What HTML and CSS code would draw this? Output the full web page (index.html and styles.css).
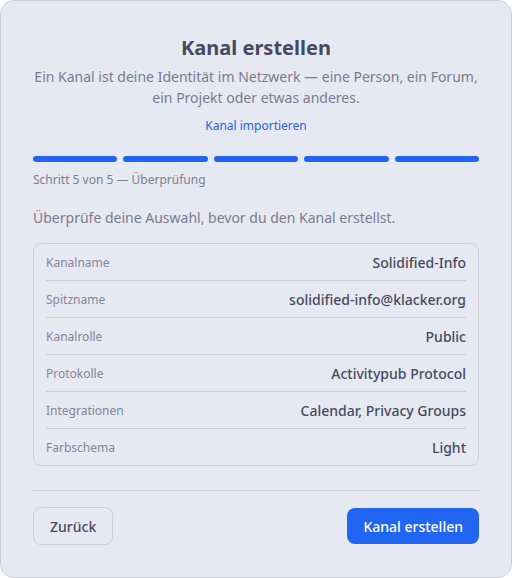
FILE: index.html
```html
<!DOCTYPE html>
<html lang="de">
<head>
<meta charset="utf-8">
<title>Kanal erstellen</title>
<link rel="stylesheet" href="styles.css">
</head>
<body>
<div class="card">
  <header class="head">
    <h1 class="title">Kanal erstellen</h1>
    <p class="subtitle">Ein Kanal ist deine Identität im Netzwerk — eine Person, ein Forum, ein Projekt oder etwas anderes.</p>
    <a class="import" href="#">Kanal importieren</a>
  </header>
  <div class="steps">
    <span class="step"></span><span class="step"></span><span class="step"></span><span class="step"></span><span class="step"></span>
  </div>
  <div class="step-label">Schritt 5 von 5 — Überprüfung</div>
  <p class="intro">Überprüfe deine Auswahl, bevor du den Kanal erstellst.</p>
  <div class="summary">
    <div class="row"><span class="key">Kanalname</span><span class="val">Solidified-Info</span></div>
    <div class="row"><span class="key">Spitzname</span><span class="val">solidified-info@klacker.org</span></div>
    <div class="row"><span class="key">Kanalrolle</span><span class="val">Public</span></div>
    <div class="row"><span class="key">Protokolle</span><span class="val">Activitypub Protocol</span></div>
    <div class="row"><span class="key">Integrationen</span><span class="val">Calendar, Privacy Groups</span></div>
    <div class="row"><span class="key">Farbschema</span><span class="val">Light</span></div>
  </div>
  <div class="actions">
    <button class="btn btn-back">Zurück</button>
    <button class="btn btn-primary">Kanal erstellen</button>
  </div>
</div>
</body>
</html>
```
FILE: styles.css
```css
* { box-sizing: border-box; }
html, body { margin: 0; padding: 0; background: #ffffff; }
body {
  font-family: "Noto Sans", "Open Sans", sans-serif;
  width: 512px;
  height: 578px;
}
.card {
  width: 512px;
  height: 578px;
  background: #e6e9f1;
  border: 1px solid #cdd0da;
  border-radius: 14px;
  padding: 34px 32px 0 32px;
  display: flex;
  flex-direction: column;
}
.head { text-align: center; }
.title {
  margin: 0;
  font-size: 20px;
  line-height: 26px;
  font-weight: 700;
  color: #464962;
}
.subtitle {
  margin: 5px -4px 0;
  font-size: 14px;
  line-height: 21px;
  color: #797c8f;
}
.import {
  display: inline-block;
  margin-top: 9px;
  font-size: 12px;
  line-height: 18px;
  color: #2563eb;
  text-decoration: none;
}
.steps {
  display: flex;
  gap: 6px;
  margin-top: 21px;
}
.step {
  flex: 1;
  height: 6px;
  border-radius: 3px;
  background: #2166f3;
}
.step-label {
  margin-top: 9px;
  font-size: 12px;
  line-height: 17px;
  color: #7b7e90;
}
.intro {
  margin: 20px 0 0;
  font-size: 14px;
  line-height: 20px;
  color: #797c8f;
}
.summary {
  margin-top: 15px;
  border: 1px solid #cdd0da;
  border-radius: 8px;
  padding: 0 12px;
}
.row {
  display: flex;
  justify-content: space-between;
  align-items: center;
  height: 37px;
  border-bottom: 1px solid #cdd0da;
}
.row:last-child { border-bottom: none; height: 36px; }
.key { font-size: 12px; color: #82859a; }
.val { font-size: 14px; font-weight: 500; color: #464962; }
.actions {
  margin-top: 24px;
  border-top: 1px solid #cdd0da;
  padding-top: 16px;
  display: flex;
  justify-content: space-between;
  align-items: center;
}
.btn {
  font-family: inherit;
  font-size: 14px;
  font-weight: 500;
  border-radius: 8px;
  cursor: pointer;
}
.btn-back {
  height: 38px;
  padding: 0 16px;
  background: transparent;
  border: 1px solid #cdd0da;
  color: #464962;
}
.btn-primary {
  height: 36px;
  padding: 0 16px;
  background: #2166f3;
  border: none;
  color: #ffffff;
}
```
